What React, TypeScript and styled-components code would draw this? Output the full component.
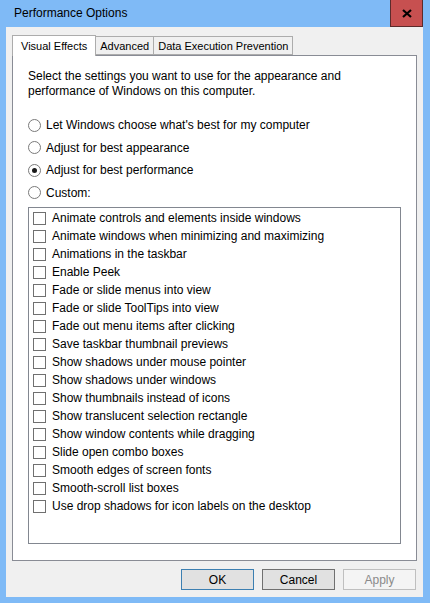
import React from "react";
import styled, { createGlobalStyle } from "styled-components";

const GlobalStyle = createGlobalStyle`
  html, body {
    margin: 0;
    padding: 0;
    background: #7fbaf6;
  }
  body {
    font-family: "Liberation Sans", Arial, sans-serif;
    font-size: 12px;
    color: #000;
  }
`;

const Window = styled.div`
  width: 430px;
  height: 603px;
  background: #7fbaf6;
  display: flex;
  flex-direction: column;
  box-sizing: border-box;
`;

const TitleBar = styled.div`
  height: 27px;
  display: flex;
  align-items: center;
  padding-left: 14px;
  padding-right: 7px;
`;

const Title = styled.div`
  flex: 1;
  font-size: 12px;
  color: #000;
  padding-bottom: 1px;
`;

const CloseButton = styled.div`
  width: 31px;
  height: 26px;
  align-self: flex-start;
  background: #c75050;
  border: 1px solid #5c2b2b;
  border-top: none;
  display: flex;
  align-items: center;
  justify-content: center;
`;

const Client = styled.div`
  flex: 1;
  margin: 0 7px 6px 6px;
  background: #f0f0f0;
  display: flex;
  flex-direction: column;
  padding: 8px 6px 0 6px;
`;

const TabRow = styled.div`
  display: flex;
  align-items: flex-end;
  height: 21px;
  position: relative;
  z-index: 1;
  margin-bottom: -1px;
`;

const Tab = styled.div<{ $active?: boolean }>`
  box-sizing: border-box;
  height: ${(p) => (p.$active ? "21px" : "19px")};
  padding: ${(p) => (p.$active ? "0 8px" : "0 4px")};
  margin-left: ${(p) => (p.$active ? "0" : "-1px")};
  margin-bottom: ${(p) => (p.$active ? "0" : "1px")};
  background: ${(p) => (p.$active ? "#fff" : "#f0f0f0")};
  border: 1px solid #acacac;
  border-bottom: ${(p) => (p.$active ? "none" : "1px solid #acacac")};
  display: flex;
  align-items: center;
  white-space: nowrap;
  font-size: 11px;
  &:first-child {
    margin-left: 0;
  }
`;

const Panel = styled.div`
  box-sizing: border-box;
  height: 506px;
  background: #fff;
  border: 1px solid #898c95;
  padding: 13px 15px 16px 15px;
  display: flex;
  flex-direction: column;
`;

const Intro = styled.p`
  margin: 0 0 15px 0;
  line-height: 15px;
`;

const RadioRow = styled.label`
  display: flex;
  align-items: center;
  height: 22.5px;
  gap: 5px;
`;

const RadioCircle = styled.span<{ $checked?: boolean }>`
  box-sizing: border-box;
  width: 13px;
  height: 13px;
  border-radius: 50%;
  border: 1px solid #7a7a7a;
  background: #fff;
  display: flex;
  align-items: center;
  justify-content: center;
  &::after {
    content: "";
    display: ${(p) => (p.$checked ? "block" : "none")};
    width: 5px;
    height: 5px;
    border-radius: 50%;
    background: #1a1a1a;
  }
`;

const ListBox = styled.div`
  box-sizing: border-box;
  flex: 1;
  margin-top: 3px;
  border: 1px solid #828790;
  background: #fff;
  padding-top: 1px;
`;

const CheckRow = styled.div`
  display: flex;
  align-items: center;
  height: 18px;
  padding-left: 4px;
  gap: 6px;
  white-space: nowrap;
`;

const CheckBox = styled.span`
  box-sizing: border-box;
  width: 13px;
  height: 13px;
  border: 1px solid #707070;
  background: #fff;
`;

const ButtonRow = styled.div`
  display: flex;
  justify-content: flex-end;
  gap: 8px;
  padding-top: 8px;
  padding-right: 1px;
`;

const Button = styled.div<{ $variant?: "default" | "normal" | "disabled" }>`
  box-sizing: border-box;
  width: 73px;
  height: 21px;
  display: flex;
  align-items: center;
  justify-content: center;
  background: ${(p) => (p.$variant === "disabled" ? "#f4f4f4" : "#e1e1e1")};
  color: ${(p) => (p.$variant === "disabled" ? "#8a8a8a" : "#000")};
  border: 1px solid
    ${(p) =>
      p.$variant === "default"
        ? "#3c7fb1"
        : p.$variant === "disabled"
        ? "#bfbfbf"
        : "#707070"};
`;

const effects = [
  "Animate controls and elements inside windows",
  "Animate windows when minimizing and maximizing",
  "Animations in the taskbar",
  "Enable Peek",
  "Fade or slide menus into view",
  "Fade or slide ToolTips into view",
  "Fade out menu items after clicking",
  "Save taskbar thumbnail previews",
  "Show shadows under mouse pointer",
  "Show shadows under windows",
  "Show thumbnails instead of icons",
  "Show translucent selection rectangle",
  "Show window contents while dragging",
  "Slide open combo boxes",
  "Smooth edges of screen fonts",
  "Smooth-scroll list boxes",
  "Use drop shadows for icon labels on the desktop",
];

const options = [
  "Let Windows choose what's best for my computer",
  "Adjust for best appearance",
  "Adjust for best performance",
  "Custom:",
];

export default function App() {
  return (
    <>
      <GlobalStyle />
      <Window>
        <TitleBar>
          <Title>Performance Options</Title>
          <CloseButton>
            <svg width="10" height="9" viewBox="0 0 10 9">
              <path d="M1 1 L9 8 M9 1 L1 8" stroke="#000" strokeWidth="2.2" />
            </svg>
          </CloseButton>
        </TitleBar>
        <Client>
          <TabRow>
            <Tab $active>Visual Effects</Tab>
            <Tab>Advanced</Tab>
            <Tab>Data Execution Prevention</Tab>
          </TabRow>
          <Panel>
            <Intro>
              Select the settings you want to use for the appearance and
              <br />
              performance of Windows on this computer.
            </Intro>
            {options.map((o, i) => (
              <RadioRow key={o}>
                <RadioCircle $checked={i === 2} />
                {o}
              </RadioRow>
            ))}
            <ListBox>
              {effects.map((e) => (
                <CheckRow key={e}>
                  <CheckBox />
                  {e}
                </CheckRow>
              ))}
            </ListBox>
          </Panel>
          <ButtonRow>
            <Button $variant="default">OK</Button>
            <Button $variant="normal">Cancel</Button>
            <Button $variant="disabled">Apply</Button>
          </ButtonRow>
        </Client>
      </Window>
    </>
  );
}
